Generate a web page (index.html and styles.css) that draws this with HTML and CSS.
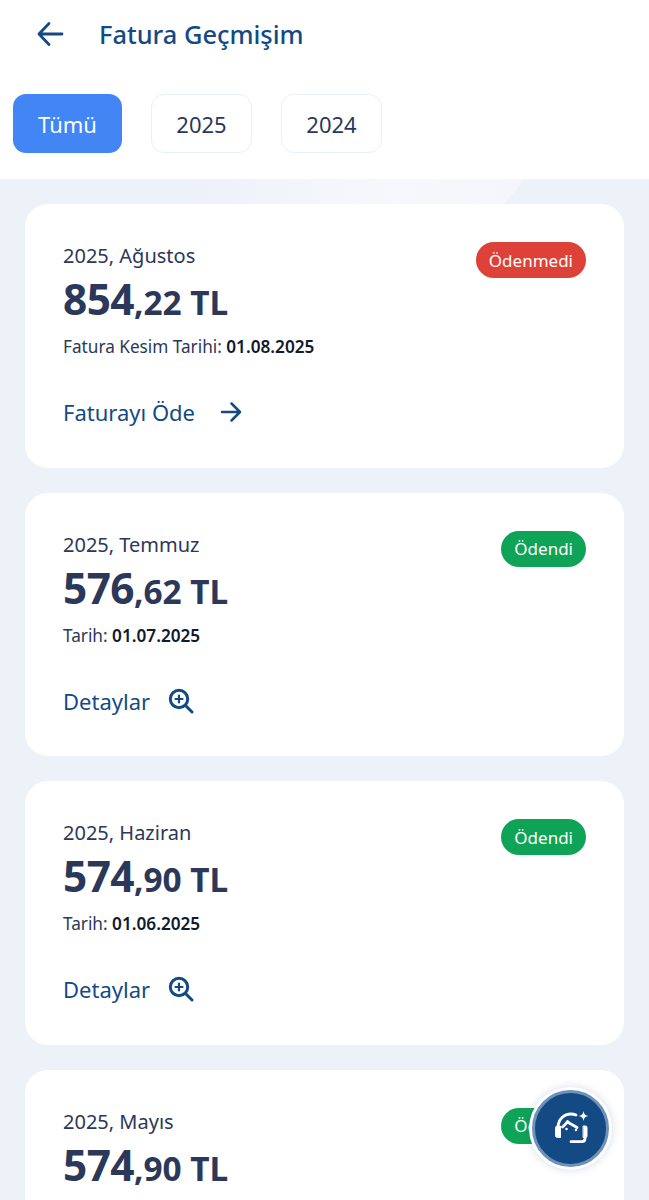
FILE: index.html
```html
<!DOCTYPE html>
<html lang="tr">
<head>
<meta charset="utf-8">
<title>Fatura Geçmişim</title>
<link rel="stylesheet" href="styles.css">
</head>
<body>
<div class="page">
  <header class="topbar">
    <svg class="back" viewBox="0 0 28 28" width="28" height="28" fill="none" stroke="#134a84" stroke-width="2.8" stroke-linecap="round" stroke-linejoin="round"><path d="M3 14H26M13 3.5 3 14l10 10.500"/></svg>
    <h1 class="title">Fatura Geçmişim</h1>
  </header>
  <nav class="filters">
    <span class="chip chip-active">Tümü</span>
    <span class="chip">2025</span>
    <span class="chip">2024</span>
  </nav>
  <main class="list">
    <div class="deco"></div>
    <article class="card">
      <div class="card-top">
        <div class="period">2025, Ağustos</div>
        <span class="badge badge-red">Ödenmedi</span>
      </div>
      <div class="amount"><b>854</b><span>,22 TL</span></div>
      <div class="date">Fatura Kesim Tarihi: <b>01.08.2025</b></div>
      <a class="action action-pay">Faturayı Öde
        <svg class="action-icon" viewBox="0 0 24 24" width="24" height="24" fill="none" stroke="#134a84" stroke-width="2.500" stroke-linecap="round" stroke-linejoin="round"><path d="M3 12h18M12.500 3.500 21 12l-8.500 8.500"/></svg>
      </a>
    </article>
    <article class="card">
      <div class="card-top">
        <div class="period">2025, Temmuz</div>
        <span class="badge badge-green">Ödendi</span>
      </div>
      <div class="amount"><b>576</b><span>,62 TL</span></div>
      <div class="date">Tarih: <b>01.07.2025</b></div>
      <a class="action">Detaylar
        <svg class="action-icon" viewBox="0 0 26 26" width="26" height="26" fill="none" stroke="#134a84" stroke-width="3" stroke-linecap="round"><circle cx="11" cy="11" r="8.700"/><path d="M17.500 17.500 24 24"/><path stroke-width="2.200" d="M7.500 11h7M11 7.500v7"/></svg>
      </a>
    </article>
    <article class="card">
      <div class="card-top">
        <div class="period">2025, Haziran</div>
        <span class="badge badge-green">Ödendi</span>
      </div>
      <div class="amount"><b>574</b><span>,90 TL</span></div>
      <div class="date">Tarih: <b>01.06.2025</b></div>
      <a class="action">Detaylar
        <svg class="action-icon" viewBox="0 0 26 26" width="26" height="26" fill="none" stroke="#134a84" stroke-width="3" stroke-linecap="round"><circle cx="11" cy="11" r="8.700"/><path d="M17.500 17.500 24 24"/><path stroke-width="2.200" d="M7.500 11h7M11 7.500v7"/></svg>
      </a>
    </article>
    <article class="card">
      <div class="card-top">
        <div class="period">2025, Mayıs</div>
        <span class="badge badge-green">Ödendi</span>
      </div>
      <div class="amount"><b>574</b><span>,90 TL</span></div>
    </article>
  </main>
  <button class="fab" aria-label="Asistan">
    <svg viewBox="0 0 36 36" width="36" height="36" fill="none" stroke="#fff" stroke-width="2.800" stroke-linecap="round" stroke-linejoin="round">
      <path d="M5 16c.5-8 6-13 13-13 2 0 3.500.3 5 1"/>
      <path d="M9.500 16c1.500-1.500 3.500-3 5-5.500 2.500 2.500 5.500 3.500 9.500 6"/>
      <path d="M2.500 17c0-1 .8-2 1.500-2h3.500v11.500H4.500c-1 0-2-.6-2-1.500Z" fill="#fff" stroke-width="1"/>
      <path d="M30.500 15h2c1 0 1.500.7 1.500 1.500V25c0 1-.6 1.500-1.500 1.500h-2Z" fill="#fff" stroke-width="1"/>
      <path d="M32 26v1.500c0 2-1 3.200-3 3.200H18"/>
      <circle cx="13.500" cy="18" r="1.300" fill="#fff" stroke="none"/>
      <circle cx="23" cy="19" r="1.300" fill="#fff" stroke="none"/>
      <path d="M30.500 0c.4 3.200 1.800 4.600 5 5-3.200.4-4.600 1.800-5 5-.4-3.200-1.800-4.600-5-5 3.200-.4 4.600-1.800 5-5Z" fill="#fff" stroke="none"/>
    </svg>
  </button>
</div>
</body>
</html>
```
FILE: styles.css
```css
* { box-sizing: border-box; }
html, body { margin: 0; padding: 0; }
body { font-family: "Noto Sans", "Open Sans", sans-serif; background: #edf1f8; color: #2b3859; }
.page { position: relative; width: 649px; height: 1200px; overflow: hidden; display: flex; flex-direction: column; }
.topbar { flex: none; display: flex; align-items: center; height: 70px; padding: 0 0 2px 36px; background: #fff; }
.back { display: block; }
.title { margin: 0 0 0 35px; font-size: 25.4px; line-height: 32px; font-weight: 500; color: #134a84; }
.filters { flex: none; display: flex; gap: 29px; height: 109px; padding: 24px 0 0 13px; background: #fff; }
.chip { display: flex; align-items: center; justify-content: center; width: 101px; height: 59px; border: 1.500px solid #e9f0fb; border-radius: 13px; font-size: 22px; color: #2b3859; background: #fff; }
.chip-active { width: 109px; border: 0; background: #4285f4; color: #fff; }
.list { position: relative; flex: 1; display: flex; flex-direction: column; gap: 25px; padding: 25px 25px 0; }
.deco { position: absolute; left: 0; top: 0; width: 525px; height: 25px; background: linear-gradient(90deg, #edf1f8 35%, #f7f8fc 75%, #f4f6fb); clip-path: polygon(0 0, 100% 0, 96% 100%, 0 100%); }
.card { position: relative; flex: none; height: 263.500px; padding: 37px 38px 0; background: #fff; border-radius: 23px; }
.card-top { display: flex; justify-content: space-between; align-items: flex-start; height: 36px; }
.period { font-size: 20px; line-height: 30px; color: #2b3859; }
.badge { display: flex; align-items: center; height: 36px; margin-top: 1px; padding: 0 13px; border-radius: 18px; font-size: 17px; color: #fff; }
.badge-red { background: #de4138; }
.badge-green { background: #0fa358; }
.amount { height: 48px; line-height: 44px; color: #2b3859; font-weight: 700; font-size: 33.4px; }
.amount b { font-size: 42.4px; font-weight: 700; letter-spacing: -.6px; }
.date { margin-top: 10px; font-size: 17.2px; line-height: 24px; color: #2b3859; }
.date b { font-weight: 600; color: #111a2e; }
.action { display: flex; align-items: center; gap: 18px; margin-top: 36px; height: 34px; font-size: 22px; color: #134a84; }
.action-pay { gap: 24px; }
.action-icon { display: block; }
.fab { position: absolute; left: 532px; top: 1090px; width: 77px; height: 77px; padding: 0; display: flex; align-items: center; justify-content: center; border: 3px solid #6f92bb; border-radius: 50%; background: #134a84; box-shadow: 0 0 0 3px #fff, 0 0 8px 3px rgba(30,60,110,.18); }
```
